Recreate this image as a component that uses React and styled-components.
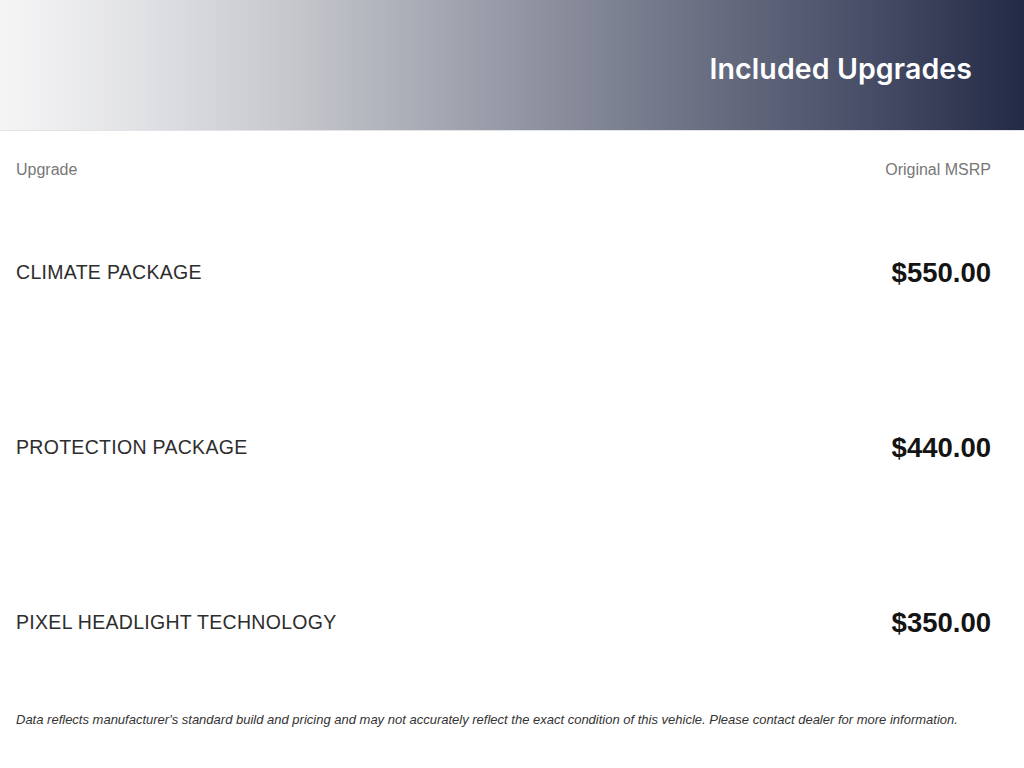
import styled, { createGlobalStyle } from "styled-components";

const upgrades = [
  { name: "CLIMATE PACKAGE", price: "$550.00" },
  { name: "PROTECTION PACKAGE", price: "$440.00" },
  { name: "PIXEL HEADLIGHT TECHNOLOGY", price: "$350.00" },
];

function App() {
  return (
    <>
      <GlobalStyle />
      <Page>
        <Banner>
          <Title>Included Upgrades</Title>
        </Banner>
        <Content>
          <ColumnHead>
            <span>Upgrade</span>
            <span>Original MSRP</span>
          </ColumnHead>
          <Rows>
            {upgrades.map((u) => (
              <Row key={u.name}>
                <Name>{u.name}</Name>
                <Price>{u.price}</Price>
              </Row>
            ))}
          </Rows>
          <Disclaimer>
            Data reflects manufacturer's standard build and pricing and may not
            accurately reflect the exact condition of this vehicle. Please
            contact dealer for more information.
          </Disclaimer>
        </Content>
      </Page>
    </>
  );
}

const GlobalStyle = createGlobalStyle`
  body {
    margin: 0;
    background: #fff;
    font-family: "Liberation Sans", Arial, sans-serif;
  }
`;

const Page = styled.div`
  width: 1024px;
  height: 768px;
  overflow: hidden;
`;

const Banner = styled.header`
  height: 131px;
  display: flex;
  align-items: center;
  justify-content: flex-end;
  padding: 0 52px 0 0;
  box-sizing: border-box;
  background: linear-gradient(
    90deg,
    #f5f5f6 0%,
    #e0e1e4 14%,
    #c6c8cd 28%,
    #a7aab4 42%,
    #868a99 56%,
    #676c80 70%,
    #474d66 85%,
    #232a45 100%
  );
  border-bottom: 1px solid #e4e4e6;
`;

const Title = styled.h1`
  margin: 6px 0 0;
  font-family: Inter, "Open Sans", sans-serif;
  font-weight: 600;
  font-size: 28.5px;
  color: #ffffff;
  letter-spacing: 0.1px;
`;

const Content = styled.main`
  padding: 0 33px 0 16px;
`;

const ColumnHead = styled.div`
  display: flex;
  justify-content: space-between;
  padding-top: 30px;
  line-height: 18px;
  font-size: 16px;
  color: #777777;
`;

const Rows = styled.div`
  margin-top: 6px;
`;

const Row = styled.div`
  height: 175px;
  display: flex;
  align-items: center;
  justify-content: space-between;
`;

const Name = styled.span`
  font-size: 19.5px;
  color: #2d2d2d;
  letter-spacing: 0.3px;
`;

const Price = styled.span`
  font-size: 27.5px;
  font-weight: bold;
  color: #141414;
`;

const Disclaimer = styled.p`
  margin: 3px 0 0;
  font-size: 13px;
  line-height: 14px;
  font-style: italic;
  color: #333;
`;

export default App;
